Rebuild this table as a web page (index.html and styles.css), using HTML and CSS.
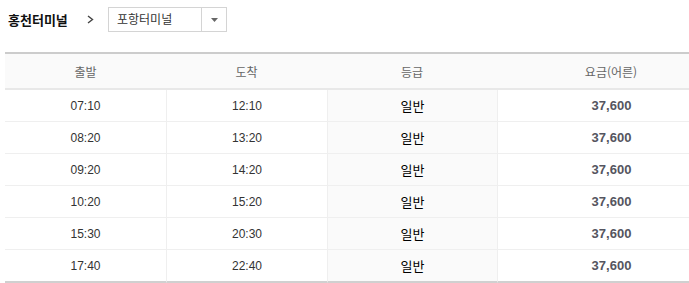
FILE: index.html
```
<!DOCTYPE html>
<html lang="ko">
<head>
<meta charset="utf-8">
<link rel="stylesheet" href="styles.css">
</head>
<body>
<div class="top">
  <span class="title">홍천터미널</span>
  <svg class="chev" width="7" height="9" viewBox="0 0 7 9"><path d="M1 1 L5.5 4.5 L1 8" fill="none" stroke="#444" stroke-width="1.4"/></svg>
  <div class="select">
    <span class="sel-text">포항터미널</span>
    <span class="sel-btn"><svg width="7" height="4" viewBox="0 0 7 4"><path d="M0 0 H7 L3.5 4 Z" fill="#666"/></svg></span>
  </div>
</div>
<div class="wrap">
<table class="tbl">
  <colgroup>
    <col class="c1"><col class="c2"><col class="c3"><col class="c4">
  </colgroup>
  <thead>
    <tr><th>출발</th><th>도착</th><th>등급</th><th class="fare-h">요금(어른)</th></tr>
  </thead>
  <tbody>
    <tr><td>07:10</td><td class="ln">12:10</td><td class="ln grade">일반</td><td class="ln fare">37,600</td></tr>
    <tr><td>08:20</td><td class="ln">13:20</td><td class="ln grade">일반</td><td class="ln fare">37,600</td></tr>
    <tr><td>09:20</td><td class="ln">14:20</td><td class="ln grade">일반</td><td class="ln fare">37,600</td></tr>
    <tr><td>10:20</td><td class="ln">15:20</td><td class="ln grade">일반</td><td class="ln fare">37,600</td></tr>
    <tr><td>15:30</td><td class="ln">20:30</td><td class="ln grade">일반</td><td class="ln fare">37,600</td></tr>
    <tr class="last"><td>17:40</td><td class="ln">22:40</td><td class="ln grade">일반</td><td class="ln fare">37,600</td></tr>
  </tbody>
</table>
</div>
</body>
</html>
```
FILE: styles.css
```
html, body {
  margin: 0;
  padding: 0;
  background: #fff;
}
body {
  font-family: "Liberation Sans", "Noto Sans CJK KR", sans-serif;
  color: #333;
}
.top {
  display: flex;
  align-items: center;
  padding: 7px 0 0 8px;
  height: 25px;
}
.title {
  font-size: 13px;
  font-weight: bold;
  color: #111;
  font-family: "Noto Sans CJK KR", sans-serif;
  width: 79px;
  line-height: 25px;
}
.chev {
  display: block;
  margin-right: 14px;
}
.select {
  display: flex;
  width: 117px;
  height: 23px;
  border: 1px solid #d4d4d4;
}
.sel-text {
  flex: 1;
  font-family: "Noto Sans CJK KR", sans-serif;
  font-size: 12px;
  color: #333;
  line-height: 22px;
  padding-left: 8px;
}
.sel-btn {
  width: 24px;
  border-left: 1px solid #d4d4d4;
  display: flex;
  align-items: center;
  justify-content: center;
}
.sel-btn svg { display: block; }
.wrap {
  margin: 20px 0 0 5px;
}
.tbl {
  width: 684px;
  border-collapse: separate;
  border-spacing: 0;
  table-layout: fixed;
}
.c1 { width: 161px; }
.c2 { width: 161px; }
.c3 { width: 170px; }
.c4 { width: 192px; }
.tbl th {
  height: 34px;
  padding: 0;
  background: #fafafa;
  border-top: 2px solid #cccccc;
  border-bottom: 2px solid #e8e8e8;
  font-family: "Noto Sans CJK KR", sans-serif;
  font-size: 12px;
  font-weight: normal;
  color: #666;
  text-align: center;
}
.tbl th.fare-h {
  padding-left: 36px;
}
.tbl td {
  height: 31px;
  padding: 0;
  border-bottom: 1px solid #efefef;
  text-align: center;
  font-size: 12px;
  color: #333;
}
.tbl td.ln {
  border-left: 1px solid #efefef;
}
.tbl td.grade {
  background: #fafafa;
  font-family: "Noto Sans CJK KR", sans-serif;
  font-size: 13px;
  color: #000;
}
.tbl td.fare {
  padding-left: 36px;
  font-weight: bold;
  font-size: 13px;
  color: #555560;
}
.tbl tr.last td {
  border-bottom: 2px solid #d0d0d0;
}
```
